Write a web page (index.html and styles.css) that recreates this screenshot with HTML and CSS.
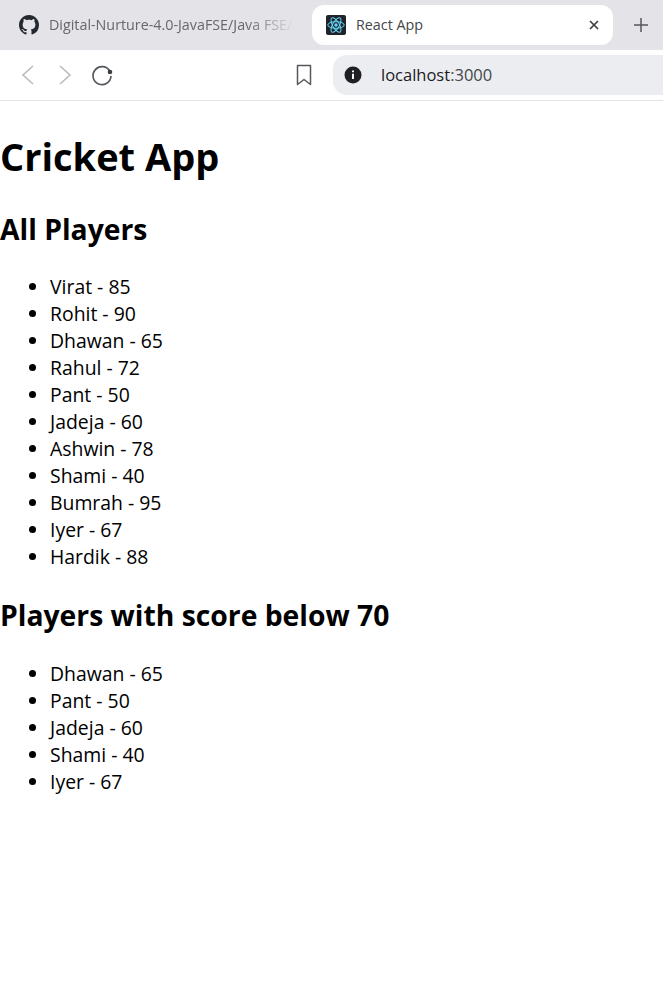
FILE: index.html
```html
<!DOCTYPE html>
<html lang="en">
<head>
<meta charset="utf-8">
<title>React App</title>
<link rel="stylesheet" href="styles.css">
</head>
<body>
<header class="chrome">
  <div class="tabstrip">
    <div class="tab tab-inactive">
      <svg class="favicon" viewBox="0 0 16 16"><path fill="#24292f" d="M8 0C3.58 0 0 3.58 0 8c0 3.54 2.29 6.53 5.47 7.59.4.07.55-.17.55-.38 0-.19-.01-.82-.01-1.49-2.01.37-2.53-.49-2.69-.94-.09-.23-.48-.94-.82-1.13-.28-.15-.68-.52-.01-.53.63-.01 1.08.58 1.23.82.72 1.21 1.87.87 2.33.66.07-.52.28-.87.51-1.07-1.78-.2-3.64-.89-3.64-3.95 0-.87.31-1.59.82-2.15-.08-.2-.36-1.02.08-2.12 0 0 .67-.21 2.2.82.64-.18 1.32-.27 2-.27s1.36.09 2 .27c1.53-1.04 2.2-.82 2.2-.82.44 1.1.16 1.92.08 2.12.51.56.82 1.27.82 2.15 0 3.07-1.87 3.75-3.65 3.95.29.25.54.73.54 1.48 0 1.07-.01 1.93-.01 2.2 0 .21.15.46.55.38A8.01 8.01 0 0 0 16 8c0-4.42-3.58-8-8-8z"/></svg>
      <span class="tab-title tab-title-faded">Digital-Nurture-4.0-JavaFSE/Java FSE/</span>
    </div>
    <div class="tab tab-active">
      <svg class="favicon" viewBox="0 0 20 20"><rect width="20" height="20" rx="2" fill="#20232a"/><g fill="none" stroke="#61dafb" stroke-width="1"><ellipse cx="10" cy="10" rx="8.2" ry="3.3"/><ellipse cx="10" cy="10" rx="8.2" ry="3.3" transform="rotate(60 10 10)"/><ellipse cx="10" cy="10" rx="8.2" ry="3.3" transform="rotate(120 10 10)"/></g><circle cx="10" cy="10" r="1.7" fill="#61dafb"/></svg>
      <span class="tab-title">React App</span>
      <svg class="tab-close" viewBox="0 0 10 10"><path d="M1 1l8 8M9 1l-8 8" stroke="#3c4043" stroke-width="1.7" fill="none"/></svg>
    </div>
    <svg class="new-tab" viewBox="0 0 14 14"><path d="M7 0v14M0 7h14" stroke="#55585c" stroke-width="1.5" fill="none"/></svg>
  </div>
  <div class="toolbar">
    <svg class="nav-icon" viewBox="0 0 24 24"><path d="M17 3L7 12l10 9" stroke="#b9babc" stroke-width="1.6" fill="none"/></svg>
    <svg class="nav-icon nav-forward" viewBox="0 0 24 24"><path d="M7 3l10 9-10 9" stroke="#b9babc" stroke-width="1.6" fill="none"/></svg>
    <svg class="nav-icon nav-reload" viewBox="0 0 24 24"><path d="M20 8.500A9 9 0 1 0 21 13" stroke="#55585c" stroke-width="1.7" fill="none"/><circle cx="20" cy="9" r="2.300" fill="#3c4043"/></svg>
    <svg class="bookmark" viewBox="0 0 16 22"><path d="M1.500 1.500h13v19L8 15.500l-6.500 5z" stroke="#55585c" stroke-width="1.500" fill="none" stroke-linejoin="round"/></svg>
    <div class="omnibox">
      <svg class="info" viewBox="0 0 18 18"><circle cx="9" cy="9" r="8.500" fill="#1f1f24"/><path d="M9 7.800v5.200M9 4.500v1.800" stroke="#fff" stroke-width="1.900"/></svg>
      <span class="url"><span class="url-host">localhost</span>:3000</span>
    </div>
  </div>
</header>
<main class="page">
  <h1 class="title">Cricket App</h1>
  <h2 class="heading">All Players</h2>
  <ul class="players">
    <li>Virat - 85</li>
    <li>Rohit - 90</li>
    <li>Dhawan - 65</li>
    <li>Rahul - 72</li>
    <li>Pant - 50</li>
    <li>Jadeja - 60</li>
    <li>Ashwin - 78</li>
    <li>Shami - 40</li>
    <li>Bumrah - 95</li>
    <li>Iyer - 67</li>
    <li>Hardik - 88</li>
  </ul>
  <h2 class="heading heading-below">Players with score below 70</h2>
  <ul class="players players-below">
    <li>Dhawan - 65</li>
    <li>Pant - 50</li>
    <li>Jadeja - 60</li>
    <li>Shami - 40</li>
    <li>Iyer - 67</li>
  </ul>
</main>
</body>
</html>
```
FILE: styles.css
```css
* { box-sizing: border-box; }
html, body { margin: 0; padding: 0; background: #fff; color: #000; overflow: hidden; }
body { font-family: "Open Sans", "Noto Sans", "Liberation Sans", sans-serif; height: 996px; }

.chrome { border-bottom: 1px solid #e3e3e6; height: 101px; }
.tabstrip { height: 50px; background: #e3e3e8; display: flex; align-items: flex-start; padding-top: 5px; }
.tab { display: flex; align-items: center; height: 40px; }
.tab-inactive { width: 312px; padding-left: 19px; overflow: hidden; }
.tab-active { width: 301px; background: #fff; border-radius: 12px; padding: 0 14px; }
.favicon { width: 20px; height: 20px; flex: none; }
.tab-title { margin-left: 10px; margin-bottom: 2px; font-size: 14.300px; color: #45474a; white-space: nowrap; }
.tab-title-faded { width: 246px; overflow: hidden; color: #66686c; -webkit-mask-image: linear-gradient(90deg, #000 80%, transparent 100%); mask-image: linear-gradient(90deg, #000 80%, transparent 100%); }
.tab-close { width: 10px; height: 10px; margin-left: auto; }
.new-tab { width: 14px; height: 14px; margin: 13px 0 0 21px; flex: none; }

.toolbar { height: 50px; display: flex; align-items: center; padding-left: 16px; }
.nav-icon { width: 24px; height: 24px; flex: none; }
.nav-forward { margin-left: 13px; }
.nav-reload { margin-left: 13px; }
.bookmark { width: 16px; height: 22px; margin-left: 182px; flex: none; }
.omnibox { margin-left: 21px; flex: 1; min-width: 0; height: 40px; background: #ecedf1; border-radius: 14px 0 0 14px; display: flex; align-items: center; padding-left: 11px; }
.info { width: 18px; height: 18px; flex: none; }
.url { margin-left: 19px; margin-bottom: 2px; font-size: 16.500px; color: #44474a; }
.url-host { color: #1b1b1f; }

.title { font-size: 38px; line-height: 54px; font-weight: 700; margin: 28px 0 0; }
.heading { font-size: 28.300px; line-height: 40px; font-weight: 700; margin: 26px 0 0; }
.heading-below { margin-top: 25px; }
.players { margin: 24px 0 0; padding: 0 0 0 50px; font-size: 19.400px; line-height: 27px; }
.players-below { margin-top: 25px; }
```
